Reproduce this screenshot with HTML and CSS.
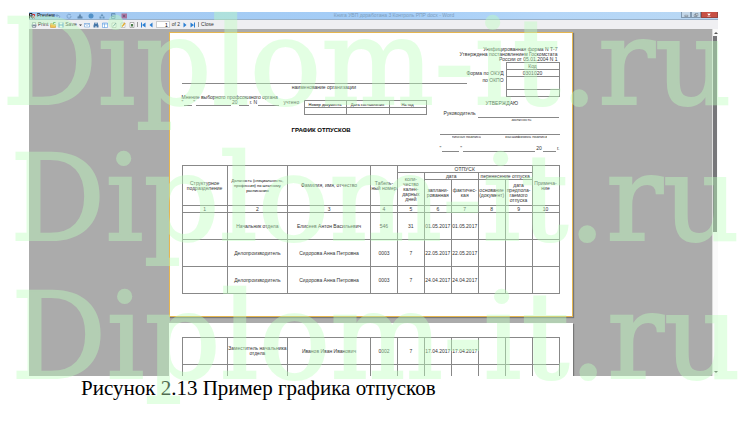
FILE: index.html
```
<!DOCTYPE html>
<html lang="ru">
<head>
  <meta charset="UTF-8">
  <title>Пример графика отпусков</title>
  <link rel="stylesheet" href="styles.css">
</head>
<body>

  <div class="window">
    <div class="titlebar">
      <svg class="logo" viewBox="0 0 12 12"><path d="M1 11V1h5v5H1M4 6l3 5" fill="none" stroke="#222" stroke-width="2"/><path d="M7 3h4v4M7 6l4 5" fill="none" stroke="#e02020" stroke-width="2"/></svg>
      <span class="title">Preview</span>
      <div class="ghosts">
        <svg viewBox="0 0 12 12"><path d="M2 5h6a3 3 0 0 1 0 5M5 2L2 5l3 3" fill="none" stroke="#6d95be" stroke-width="2"/></svg>
        <svg viewBox="0 0 12 12"><path d="M10 6a4 4 0 1 1-2-3l2 1" fill="none" stroke="#6d95be" stroke-width="2"/></svg>
        <svg viewBox="0 0 12 12"><path d="M6 1l3 6h2v4H1V7h2z" fill="#436b8f"/></svg>
        <svg viewBox="0 0 12 12"><circle cx="6" cy="6" r="5" fill="#2f78b5"/></svg>
        <svg viewBox="0 0 12 12"><path d="M6 1l3 5H3zM1 7h4v4H1zM7 7h4v4H7z" fill="#5080a5"/></svg>
        <svg viewBox="0 0 12 12"><path d="M3 1h7v10H3zM4 4h5M4 7h5" fill="none" stroke="#5080a5" stroke-width="2"/></svg>
        <svg viewBox="0 0 12 12"><path d="M1 1h11v10H1z" fill="#a84f78"/><path d="M4 4h4v4H4z" fill="#622c55"/></svg>
      </div>
      <span class="behind">Книга УВП доработана 3 Контроль РПР docx - Word</span>
      <div class="controls">
        <button type="button" aria-label="Minimize"><svg viewBox="0 0 10 7"><path d="M3 4h5v2H3z" fill="#fff" stroke="#456" stroke-width=".8"/></svg></button>
        <button type="button" aria-label="Restore"><svg viewBox="0 0 10 7"><path d="M4 1h4v4H4zM2 3h4v3H2z" fill="#fff" stroke="#456" stroke-width=".8"/></svg></button>
        <button type="button" class="close" aria-label="Close window"><svg viewBox="0 0 10 7"><path d="M3 1l4 5M7 1L3 6" stroke="#fff" stroke-width="2"/></svg></button>
      </div>
    </div>

    <div class="toolbar">
      <button type="button"><svg viewBox="0 0 12 12"><path d="M3 5V1h6v4" fill="#fff" stroke="#678" /><path d="M1 5h10v4H1z" fill="#8b9ba8"/><path d="M3 8h6v3H3z" fill="#fff" stroke="#567"/></svg>Print</button>
      <button type="button" aria-label="Open"><svg viewBox="0 0 12 12"><path d="M1 11V3h4l1 2h5v6z" fill="#f3c552" stroke="#c58f27"/><path d="M7 4V1h4" fill="none" stroke="#58a058" stroke-width="2"/></svg></button>
      <button type="button"><svg viewBox="0 0 12 12"><path d="M1 1h10v10H1z" fill="#508fd0"/><path d="M3 1h6v4H3zM3 7h6v4H3z" fill="#fff"/></svg>Save</button>
      <button type="button" aria-label="Save options"><svg class="drop" viewBox="0 0 6 6"><path d="M0 2h6L3 5z" fill="#333"/></svg></button>
      <div class="icons">
        <button type="button" aria-label="E-mail"><svg viewBox="0 0 12 12"><path d="M1 3h10v7H1zl5 4 5-4" fill="#fff" stroke="#4a8ed5"/></svg></button>
        <button type="button" aria-label="Find"><svg viewBox="0 0 12 12"><path d="M3 1h2v3h2V1h2l2 6v4H7V8H5v3H1V7z" fill="#4777a8"/></svg></button>
        <button type="button" aria-label="Outline"><svg viewBox="0 0 12 12"><path d="M1 2h10v9H1zM5 3v8M1 4h10" fill="#fff" stroke="#3d8add"/></svg></button>
        <button type="button" aria-label="Page setup"><svg viewBox="0 0 12 12"><path d="M2 2h8v9H2z" fill="#fff" stroke="#999"/><path d="M4 9l6-7" stroke="#68889d" stroke-width="2"/></svg></button>
        <button type="button" aria-label="Edit page"><svg viewBox="0 0 12 12"><path d="M2 2h8v9H2z" fill="#fff" stroke="#999"/><path d="M4 9l6-7" stroke="#e2aa33" stroke-width="3"/></svg></button>
        <button type="button" aria-label="Watermark"><svg viewBox="0 0 12 12"><path d="M2 1h8v10H2z" fill="#fff" stroke="#777"/><path d="M4 4h4v5H4z" fill="#497c49"/></svg></button>
      </div>
      <span class="sep"></span>
      <button type="button" aria-label="First page"><svg viewBox="0 0 12 12"><path d="M2 1h2v10H2zM11 1v10L4 6z" fill="#2b7fd2"/></svg></button>
      <button type="button" aria-label="Previous page"><svg viewBox="0 0 12 12"><path d="M9 1v10L3 6z" fill="#2b7fd2"/></svg></button>
      <label class="pager"><input type="text" value="1" aria-label="Page">of 2</label>
      <button type="button" aria-label="Next page"><svg viewBox="0 0 12 12"><path d="M3 1v10l6-5z" fill="#2b7fd2"/></svg></button>
      <button type="button" aria-label="Last page"><svg viewBox="0 0 12 12"><path d="M8 1h2v10H8zM1 1v10l7-5z" fill="#2b7fd2"/></svg></button>
      <span class="sep"></span>
      <button type="button">Close</button>
    </div>

    <div class="workspace">
      <div class="pages">
        <div class="page active">
          <div class="top">
            <div class="org">
              <div class="rule"></div>
              <p class="under">наименование организации</p>
              <p>Мнение выборного профсоюзного органа</p>
            </div>
            <div class="form-info">
              <p>Унифицированная форма N Т-7</p>
              <p>Утверждена постановлением Госкомстата</p>
              <p>России от 05.01.2004 N 1</p>
              <table class="codes">
                <tr><th></th><td>Код</td></tr>
                <tr><th scope="row">Форма по ОКУД</th><td>0301020</td></tr>
                <tr class="tall"><th scope="row">по ОКПО</th><td></td></tr>
                <tr><th></th><td></td></tr>
              </table>
            </div>
          </div>

          <div class="middle">
            <div class="opinion">
              <div class="dateline">"<i class="w8"></i>"<i class="w35"></i>20<i class="w10"></i>г. N<i class="grow"></i></div>
              <span class="noted">учтено</span>
              <table class="doc">
                <tr><th class="doc-num">Номер документа</th><th class="doc-date">Дата составления</th><th>На год</th></tr>
                <tr><td></td><td></td><td></td></tr>
              </table>
              <h1>ГРАФИК ОТПУСКОВ</h1>
            </div>
            <div class="approve">
              <p class="approve-title">УТВЕРЖДАЮ</p>
              <div class="head">Руководитель<i class="grow"></i></div>
              <p class="cut position">должность</p>
              <div class="rule"></div>
              <div class="signs"><p class="cut">личная подпись</p><p class="cut">расшифровка подписи</p></div>
              <div class="dateline">"<i class="w18"></i>"<i class="grow"></i>20<i class="w14"></i>г.</div>
            </div>
          </div>

          <table class="schedule">
            <colgroup><col class="c-unit"><col class="c-post"><col class="c-name"><col class="c-num"><col class="c-num"><col class="c-num"><col class="c-num"><col class="c-num"><col class="c-num"><col class="c-num"></colgroup>
            <thead>
              <tr class="low">
                <th rowspan="3">Структурное<br>подразделение</th>
                <th rowspan="3" class="tight">Должность (специальность,<br>профессия) по штатному<br>расписанию</th>
                <th rowspan="3">Фамилия, имя, отчество</th>
                <th rowspan="3">Табель-<br>ный номер</th>
                <th colspan="5">ОТПУСК</th>
                <th rowspan="3">Примеча-<br>ние</th>
              </tr>
              <tr class="low">
                <th rowspan="2">коли-<br>чество<br>кален-<br>дарных<br>дней</th>
                <th colspan="2">дата</th>
                <th colspan="2">перенесение отпуска</th>
              </tr>
              <tr class="names">
                <th>заплани-<br>рованная</th>
                <th>фактичес-<br>кая</th>
                <th>основание<br>(документ)</th>
                <th>дата<br>предпола-<br>гаемого<br>отпуска</th>
              </tr>
              <tr class="low"><th>1</th><th>2</th><th>3</th><th>4</th><th>5</th><th>6</th><th>7</th><th>8</th><th>9</th><th>10</th></tr>
            </thead>
            <tbody>
              <tr><td></td><td>Начальник отдела</td><td>Елисеев Антон Васильевич</td><td>546</td><td>31</td><td>01.05.2017</td><td>01.05.2017</td><td></td><td></td><td></td></tr>
              <tr><td></td><td>Делопроизводитель</td><td>Сидорова Анна Петровна</td><td>0003</td><td>7</td><td>22.05.2017</td><td>22.05.2017</td><td></td><td></td><td></td></tr>
              <tr><td></td><td>Делопроизводитель</td><td>Сидорова Анна Петровна</td><td>0003</td><td>7</td><td>24.04.2017</td><td>24.04.2017</td><td></td><td></td><td></td></tr>
            </tbody>
          </table>
        </div>

        <div class="page">
          <table class="schedule">
            <colgroup><col class="c-unit"><col class="c-post"><col class="c-name"><col class="c-num"><col class="c-num"><col class="c-num"><col class="c-num"><col class="c-num"><col class="c-num"><col class="c-num"></colgroup>
            <tbody>
              <tr><td></td><td>Заместитель начальника<br>отдела</td><td>Иванов Иван Иванович</td><td>0002</td><td>7</td><td>17.04.2017</td><td>17.04.2017</td><td></td><td></td><td></td></tr>
              <tr><td></td><td></td><td>Сидорова Анна Петровна</td><td>0003</td><td>14</td><td>24.04.2017</td><td>24.04.2017</td><td></td><td></td><td></td></tr>
            </tbody>
          </table>
        </div>
      </div>

      <div class="scrollbar">
        <svg viewBox="0 0 6 6"><path d="M1 4l2-2 2 2z" fill="#555"/></svg>
        <div class="track"><div class="thumb"></div></div>
        <svg viewBox="0 0 6 6"><path d="M1 2l2 2 2-2z" fill="#555"/></svg>
      </div>
    </div>
  </div>

  <p class="caption">Рисунок 2.13 Пример графика отпусков</p>

  <!-- watermark over the whole figure -->
  <div class="watermark first" aria-hidden="true">Diplom-it.ru</div>
  <div class="watermark second" aria-hidden="true">Diplom-it.ru</div>
  <div class="watermark third" aria-hidden="true">Diplom-it.ru</div>

</body>
</html>
```
FILE: styles.css
```
* {
  box-sizing: border-box;
}
body {
  position: relative;
  margin: 0;
  min-height: 100vh;
  overflow: hidden;
  background: white;
  font-family: "Liberation Sans", Arial, sans-serif;
  font-size: 5px;
  line-height: 5px;
  color: #333;
}
p, h1 {
  margin: 0;
}
button {
  display: flex;
  align-items: center;
  gap: 1px;
  padding: 0;
  border: none;
  background: none;
  font: inherit;
  color: inherit;
}
svg {
  display: block;
  width: 6px;
  height: 6px;
}
table {
  border-collapse: collapse;
}
th {
  font-weight: normal;
}
.window {
  display: flex;
  flex-direction: column;
  height: calc(100vh - 45px);
  min-height: 180px;
  margin: 0 23px 0 29px;
  padding-top: 12px;
}

/* title bar */
.titlebar {
  display: flex;
  align-items: center;
  height: 8px;
  flex: none;
  background: linear-gradient(to right, #a5caf0, #a4cdf7 50%, #b4d6f8 75%, #b9d8f4);
  border-bottom: 1px solid #98b0c8;
}
.logo {
  margin-right: 2px;
}
.title {
  width: 18px;
  color: #000;
}
.ghosts {
  display: flex;
  gap: 5px;
  opacity: 0.7;
}
.behind {
  margin: 0 auto;
  padding-right: 20px;
  color: #7e9dbd;
}
.controls {
  display: flex;
  align-self: flex-start;
}
.controls button {
  width: 10px;
  height: 6px;
  justify-content: center;
  border: 1px solid #8299b0;
  border-top: none;
  background: #c4d7e8;
}
.controls .close {
  width: 17px;
  background: #c75045;
  border-color: #98443e;
}

/* toolbar */
.toolbar {
  display: flex;
  align-items: center;
  gap: 2px;
  height: 9px;
  flex: none;
  padding: 0 2px;
  background: #efeff2;
}
.drop {
  width: 3px;
}
.icons {
  display: flex;
  gap: 3px;
}
.sep {
  width: 1px;
  height: 5px;
  background: #999;
}
.pager {
  display: flex;
  align-items: center;
  gap: 2px;
}
.pager input {
  width: 14px;
  height: 7px;
  padding: 0 1px;
  border: 1px solid #ccc;
  background: white;
  font: inherit;
  text-align: right;
}

/* preview area */
.workspace {
  display: flex;
  flex: 1;
  min-height: 0;
  background: #ababab;
}
.pages {
  flex: 1;
  overflow: hidden;
  padding-top: 3px;
}
.page {
  max-width: 404px;
  min-height: 285px;
  margin: 0 auto 6px;
  padding: 13px 12px;
  background: white;
  border: 1px solid white;
  box-shadow: 1px 1px 1px #777;
}
.page.active {
  border-color: #e5b650;
}
.top {
  display: flex;
}
.org {
  width: 285px;
  flex: none;
  padding-top: 37px;
}
.form-info {
  display: flex;
  flex-direction: column;
  align-items: flex-end;
  flex: 1;
  min-width: 0;
  padding-top: 1px;
  white-space: nowrap;
}
.form-info p {
  padding-right: 2px;
}
.rule {
  border-top: 1px solid #888;
}
.under {
  padding: 1px 0 5px;
  text-align: center;
}
.codes th {
  padding: 0 2px 0 0;
  text-align: right;
  vertical-align: middle;
}
.codes td {
  width: 55px;
  height: 7px;
  padding: 0;
  border: 1px solid #888;
  text-align: center;
}
.codes .tall th {
  padding-top: 1px;
  vertical-align: top;
}
.codes .tall td {
  height: 13px;
}
.middle {
  display: flex;
  justify-content: space-between;
  height: 65px;
}
.opinion {
  display: grid;
  grid-template-columns: 98px 24px 123px;
  grid-template-rows: 14px 1fr;
  row-gap: 13px;
}
.noted {
  padding-left: 4px;
}
.dateline, .head {
  display: flex;
  height: 6px;
  white-space: nowrap;
}
.dateline i, .head i {
  border-bottom: 1px solid #888;
  margin: 0 1px;
}
.w8 { width: 8px; }
.w10 { width: 10px; }
.w14 { width: 13px; }
.w18 { width: 17px; }
.w35 { width: 35px; }
.grow { flex: 1; }
.doc {
  table-layout: fixed;
  font-size: 4px;
  color: #000;
}
.doc th, .doc td {
  height: 7px;
  padding: 0;
  border: 1px solid #888;
  white-space: nowrap;
}
.doc-num { width: 42px; }
.doc-date { width: 43px; }
h1 {
  grid-column: 1 / -1;
  padding-left: 110px;
  font-size: 6px;
  line-height: 7px;
  color: #000;
}
.approve {
  width: 120px;
}
.approve-title {
  padding: 1px 0 5px 46px;
}
.head {
  padding-left: 4px;
  height: 7px;
}
.head i {
  margin-left: 2px;
}
.cut {
  height: 3px;
  overflow: hidden;
  font-size: 4px;
  line-height: 4px;
}
.position {
  margin-bottom: 13px;
  padding-left: 72px;
}
.signs {
  display: flex;
  justify-content: space-around;
  margin-bottom: 8px;
}
.schedule {
  width: 100%;
  table-layout: fixed;
}
.schedule th, .schedule td {
  height: 27px;
  padding: 0;
  border: 1px solid #888;
  text-align: center;
  white-space: nowrap;
}
.schedule .low th {
  height: 7px;
}
.schedule .names th {
  height: 26px;
}
.schedule .tight {
  font-size: 4px;
  color: #000;
}
.c-unit { width: 12%; }
.c-post { width: 16%; }
.c-name { width: 22%; }

/* scrollbar */
.scrollbar {
  display: flex;
  flex-direction: column;
  width: 6px;
  padding: 1px 0;
  background: #fafafa;
  border-left: 1px solid #ddd;
}
.track {
  flex: 1;
}
.thumb {
  width: 4px;
  height: 59%;
  background: #77777a;
}

.caption {
  padding: 1px 81px;
  font-family: "Liberation Serif", "Times New Roman", serif;
  font-size: 21px;
  line-height: 23px;
  color: #000;
}

.watermark {
  position: absolute;
  font-family: "DejaVu Serif", serif;
  font-size: 119px;
  line-height: 136px;
  white-space: nowrap;
  color: rgb(190, 255, 190);
  -webkit-text-stroke: 2px rgb(190, 255, 190);
  opacity: 0.42;
  pointer-events: none;
}
.first { top: -5px; left: 2px; }
.second { top: 131px; left: 10px; }
.third { top: 269px; left: 11px; }
```
